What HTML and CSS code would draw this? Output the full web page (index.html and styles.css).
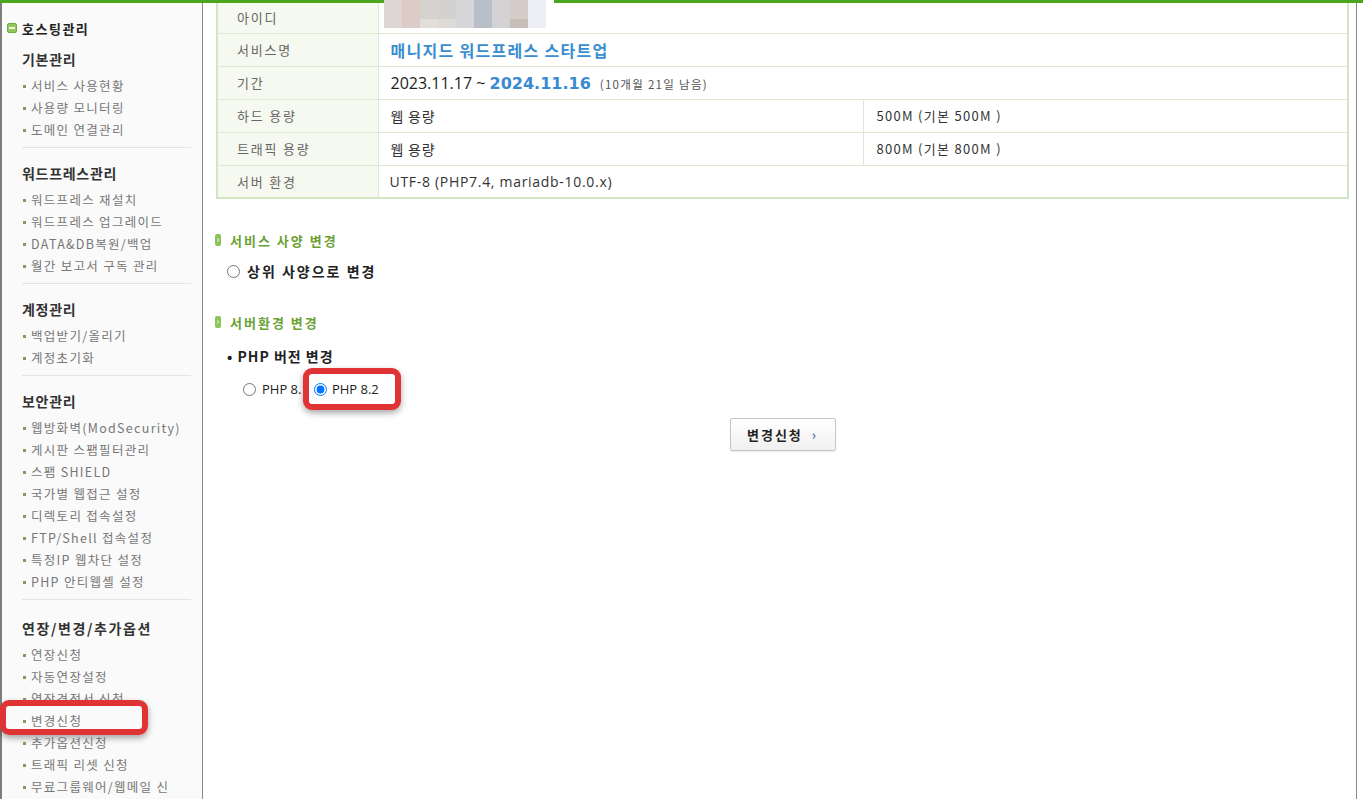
FILE: index.html
```html
<html>
<head>
  <meta charset="utf-8">
  <link rel="stylesheet" href="styles.css">
</head>

<body>
  <div class="topbar"></div>

  <div class="layout">
    <aside class="sidebar">
      <div class="side-title"><span class="minus-icon"></span>호스팅관리</div>

      <div class="menu-group first">
        <h3>기본관리</h3>
        <ul>
          <li>서비스 사용현황</li>
          <li>사용량 모니터링</li>
          <li>도메인 연결관리</li>
        </ul>
      </div>

      <div class="menu-group">
        <h3>워드프레스관리</h3>
        <ul>
          <li>워드프레스 재설치</li>
          <li>워드프레스 업그레이드</li>
          <li>DATA&amp;DB복원/백업</li>
          <li>월간 보고서 구독 관리</li>
        </ul>
      </div>

      <div class="menu-group">
        <h3>계정관리</h3>
        <ul>
          <li>백업받기/올리기</li>
          <li>계정초기화</li>
        </ul>
      </div>

      <div class="menu-group">
        <h3>보안관리</h3>
        <ul>
          <li>웹방화벽(ModSecurity)</li>
          <li>게시판 스팸필터관리</li>
          <li>스팸 SHIELD</li>
          <li>국가별 웹접근 설정</li>
          <li>디렉토리 접속설정</li>
          <li>FTP/Shell 접속설정</li>
          <li>특정IP 웹차단 설정</li>
          <li>PHP 안티웹셸 설정</li>
        </ul>
      </div>

      <div class="menu-group last">
        <h3 class="wide">연장/변경/추가옵션</h3>
        <ul>
          <li>연장신청</li>
          <li>자동연장설정</li>
          <li>연장견적서 신청</li>
          <li class="marked">변경신청</li>
          <li>추가옵션신청</li>
          <li>트래픽 리셋 신청</li>
          <li class="long">무료그룹웨어/웹메일 신청</li>
        </ul>
      </div>
    </aside>

    <main class="content">
      <table class="info">
        <colgroup>
          <col class="col-label">
          <col class="col-value">
          <col>
        </colgroup>
        <tr class="row-first">
          <td class="label">아이디</td>
          <td class="value masked" colspan="2">
            <div class="mosaic">
              <span class="m1"></span><span class="m2"></span><span class="m3"></span><span class="m4"></span><span class="m5"></span><span class="m6"></span><span class="m7"></span><span class="m8"></span><span class="m9"></span><span class="mw"></span>
              <span class="m1"></span><span class="m2"></span><span class="n3"></span><span class="n4"></span><span class="m5"></span><span class="m6"></span><span class="m7"></span><span class="n8"></span><span class="m9"></span><span class="mw"></span>
            </div>
          </td>
        </tr>
        <tr>
          <td class="label">서비스명</td>
          <td class="value" colspan="2"><span class="service-name">매니지드 워드프레스 스타트업</span></td>
        </tr>
        <tr>
          <td class="label">기간</td>
          <td class="value" colspan="2"><span class="date-from">2023.11.17 ~ </span><span class="date-to">2024.11.16</span> <span class="remain">(10개월 21일 남음)</span></td>
        </tr>
        <tr>
          <td class="label">하드 용량</td>
          <td class="value">웹 용량</td>
          <td class="value small">500M (기본 500M )</td>
        </tr>
        <tr>
          <td class="label">트래픽 용량</td>
          <td class="value">웹 용량</td>
          <td class="value small">800M (기본 800M )</td>
        </tr>
        <tr>
          <td class="label">서버 환경</td>
          <td class="value latin" colspan="2">UTF-8 (PHP7.4, mariadb-10.0.x)</td>
        </tr>
      </table>

      <h4 class="sec-title">
        <svg class="sec-icon" width="6" height="12" viewBox="0 0 6 12"><rect width="6" height="12" rx="2" fill="#8dc358"/><path d="M2.2 4.6 L3.8 6 L2.2 7.4" stroke="#ffffff" stroke-width="1" fill="none"/></svg>
        서비스 사양 변경
      </h4>
      <label class="opt-big"><input type="radio" name="spec"> 상위 사양으로 변경</label>

      <h4 class="sec-title second">
        <svg class="sec-icon" width="6" height="12" viewBox="0 0 6 12"><rect width="6" height="12" rx="2" fill="#8dc358"/><path d="M2.2 4.6 L3.8 6 L2.2 7.4" stroke="#ffffff" stroke-width="1" fill="none"/></svg>
        서버환경 변경
      </h4>
      <p class="sub-title">• PHP 버전 변경</p>

      <div class="php-row">
        <label class="php-opt"><input type="radio" name="php"> PHP 8.1</label>
        <label class="php-opt highlight"><input type="radio" name="php" checked> PHP 8.2</label>
      </div>

      <div class="btn-row">
        <button class="btn-apply">변경신청 <span class="arr">›</span></button>
      </div>
    </main>
  </div>
</body>
</html>
```

FILE: styles.css
```css
body
{
  margin: 0;
  background: #ffffff;
  font-family: "Noto Sans CJK KR", "Noto Sans", sans-serif;
  color: #333;
}

.topbar
{
  height: 3px;
  background: #4ba51f;
}

.layout
{
  display: flex;
  width: 1357px;
}

/* ---- left menu ---- */
.sidebar
{
  width: 169px;
  min-height: 796px;
  background: #fafafa;
  border-left: 2px solid #7d7d7d;
  border-right: 1px solid #8a8a8a;
  padding: 0 11px 0 20px;
}

.side-title
{
  display: flex;
  align-items: center;
  gap: 5px;
  margin: 15px 0 0 -15px;
  height: 20px;
  font-size: 13px;
  font-weight: bold;
  letter-spacing: 1.5px;
  color: #222;
}

.minus-icon
{
  position: relative;
  width: 10px;
  height: 10px;
  box-sizing: border-box;
  background: #93c65c;
  border: 1px solid #73a83f;
  border-radius: 2px;
}
.minus-icon::after
{
  content: "";
  position: absolute;
  left: 1px;
  top: 3px;
  width: 6px;
  height: 2px;
  background: #e9f5dc;
}

.menu-group
{
  padding: 15px 0 6px;
  border-bottom: 1px solid #e4e4e4;
}
.menu-group.first { padding-top: 11px; }
.menu-group.last { border-bottom: none; padding-top: 18px; }

.menu-group h3
{
  margin: 0 0 6px;
  height: 20px;
  line-height: 20px;
  font-size: 14px;
  letter-spacing: 0.7px;
  color: #333;
}
.menu-group h3.wide { letter-spacing: 1.6px; }

.menu-group ul
{
  margin: 0;
  padding: 0;
  list-style: none;
}

.menu-group li
{
  position: relative;
  padding-left: 9px;
  line-height: 22px;
  font-size: 12.5px;
  letter-spacing: 1.3px;
  color: #777;
}
.menu-group li.long { padding-right: 14px; }
.menu-group li::before
{
  content: "";
  display: inline-block;
  width: 3px;
  height: 3px;
  margin: 0 5px 0 -8px;
  background: #7f9a63;
  vertical-align: 3px;
}

/* red marker round the current menu item */
.menu-group li.marked::after
{
  content: "";
  position: absolute;
  left: -22px;
  top: -10px;
  width: 148px;
  height: 35px;
  box-sizing: border-box;
  border: 6px solid #e03333;
  border-radius: 9px;
  box-shadow: 0 3px 6px rgba(0, 0, 0, 0.35);
}

/* ---- main content ---- */
.content
{
  flex: 1;
  border-right: 1px solid #8a8a8a;
  padding: 0 7px 0 13px;
}

.info
{
  width: 100%;
  table-layout: fixed;
  border-collapse: collapse;
  border-left: 2px solid #d4e5c1;
  border-right: 2px solid #d4e5c1;
  border-bottom: 2px solid #d4e5c1;
}
.col-label { width: 161px; }
.col-value { width: 485px; }

.info td
{
  height: 33px;
  padding: 0 12px;
  border: 1px solid #dde9d0;
  font-size: 14px;
  color: #333;
}
.info .row-first td
{
  height: 30px;
  border-top: none;
}

.info td.label
{
  padding-left: 19px;
  background: #f6f9f0;
  font-size: 13px;
  letter-spacing: 1.8px;
  color: #666;
}

.info td.value { letter-spacing: 0.8px; }
.info td.small { font-size: 13px; letter-spacing: 1.3px; padding-left: 13px; color: #333; }
.info td.latin { font-family: "Open Sans", "Noto Sans CJK KR", sans-serif; letter-spacing: 0.7px; padding-left: 11px; }

.masked { position: relative; }
.mosaic
{
  position: absolute;
  left: 5px;
  top: -3px;
  display: grid;
  grid-template-columns: repeat(9, 18px) 8px;
  grid-template-rows: 19px 9px;
}
.mosaic .m1 { background: #ddd6d4; }
.mosaic .m2 { background: #dccbc6; }
.mosaic .m3 { background: #d6d2cf; }
.mosaic .n3 { background: #e4ded8; }
.mosaic .m4 { background: #d4d2d0; }
.mosaic .n4 { background: #dedad5; }
.mosaic .m5 { background: #d6d6d8; }
.mosaic .m6 { background: #b8bfc8; }
.mosaic .m7 { background: #d4d2d4; }
.mosaic .m8 { background: #d6cbc6; }
.mosaic .n8 { background: #c9bdb7; }
.mosaic .m9 { background: #eceef3; }
.mosaic .mw { background: #ffffff; }

.service-name
{
  font-size: 16px;
  font-weight: bold;
  letter-spacing: 1.3px;
  color: #3a8ed0;
}
.date-from
{
  font-family: "Open Sans", sans-serif;
  font-size: 16px;
  letter-spacing: 0;
  color: #222;
}
.date-to
{
  font-family: "DejaVu Sans", sans-serif;
  font-size: 16px;
  font-weight: bold;
  letter-spacing: 0;
  color: #3a8ad0;
}
.remain
{
  margin-left: 5px;
  font-size: 11.5px;
  letter-spacing: 1.3px;
  color: #555;
}

.sec-title
{
  display: flex;
  align-items: center;
  gap: 9px;
  margin: 31px 0 0 -1px;
  height: 20px;
  font-size: 13px;
  letter-spacing: 2px;
  color: #6ba135;
}
.sec-title.second { margin-top: 30px; }

.opt-big
{
  display: flex;
  align-items: center;
  gap: 7px;
  height: 22px;
  margin-top: 10px;
  padding-left: 11px;
  font-size: 14px;
  font-weight: bold;
  letter-spacing: 2px;
  color: #222;
}
.opt-big input { margin: 0; width: 13px; height: 13px; }

.sub-title
{
  margin: 14px 0 0;
  padding-left: 11px;
  height: 20px;
  line-height: 20px;
  font-size: 14px;
  font-weight: bold;
  letter-spacing: 1px;
  color: #222;
}

.php-row
{
  display: flex;
  align-items: center;
  height: 42px;
  margin-top: 2px;
  padding-left: 27px;
  font-family: "Open Sans", "Noto Sans", sans-serif;
  font-size: 13px;
  color: #222;
}

.php-opt
{
  display: flex;
  align-items: center;
  gap: 6px;
}
.php-opt input { margin: 0; width: 13px; height: 13px; }

.php-opt.highlight
{
  position: relative;
  box-sizing: border-box;
  width: 98px;
  height: 42px;
  margin-left: -6px;
  padding-left: 5px;
  gap: 5px;
  background: #ffffff;
  border: 6px solid #e03333;
  border-radius: 9px;
  box-shadow: 0 3px 6px rgba(0, 0, 0, 0.35);
}

.btn-row
{
  margin-top: 8px;
  text-align: center;
}

.btn-apply
{
  width: 106px;
  height: 33px;
  font-family: "Noto Sans CJK KR", sans-serif;
  font-size: 13px;
  font-weight: bold;
  letter-spacing: 2px;
  color: #222;
  background: linear-gradient(#ffffff, #f0f0f0);
  border: 1px solid #c6c6c6;
  border-radius: 2px;
  box-shadow: 0 1px 1px rgba(0, 0, 0, 0.08);
  cursor: pointer;
}
.btn-apply .arr
{
  margin-left: 4px;
  color: #5a72a0;
}
```
